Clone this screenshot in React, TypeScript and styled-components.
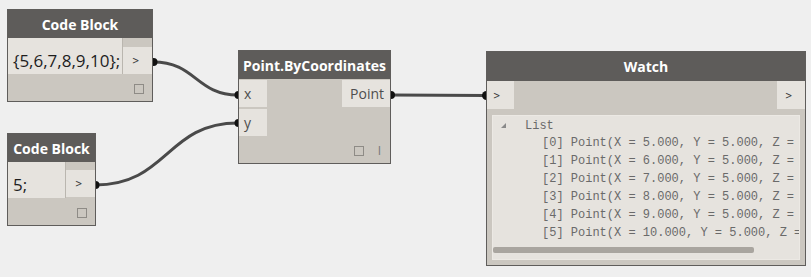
import React from "react";
import styled, { createGlobalStyle } from "styled-components";

const GlobalStyle = createGlobalStyle`
  html, body { margin: 0; padding: 0; background: #efefef; }
  body { font-family: "Open Sans", "Liberation Sans", sans-serif; }
`;

const C = {
  bg: "#efefef",
  header: "#5e5c5a",
  body: "#cbc7c0",
  port: "#e6e3de",
  border: "#5f5d5b",
  wire: "#4a4a4a",
  label: "#4e4e4e",
};

const Canvas = styled.div`
  position: relative;
  width: 811px;
  height: 277px;
  overflow: hidden;
  background: ${C.bg};
`;

const Wires = styled.svg`
  position: absolute;
  left: 0;
  top: 0;
  z-index: 0;
`;

const Node = styled.div<{ $x: number; $y: number; $w: number }>`
  position: absolute;
  left: ${(p) => p.$x}px;
  top: ${(p) => p.$y}px;
  width: ${(p) => p.$w}px;
  box-sizing: border-box;
  border: 1px solid ${C.border};
  background: ${C.body};
  z-index: 1;
  display: flex;
  flex-direction: column;
`;

const Header = styled.div<{ $h?: number }>`
  height: ${(p) => p.$h ?? 28}px;
  background: ${C.header};
  color: #ffffff;
  font: 700 14px "Open Sans", "Liberation Sans", sans-serif;
  display: flex;
  align-items: center;
  justify-content: center;
  white-space: nowrap;
`;

const CodeRow = styled.div`
  display: flex;
  height: 36px;
`;

const CodeArea = styled.div`
  flex: 1;
  background: ${C.port};
  border-right: 1px solid #bab6af;
  font: 400 17px "Open Sans", "Liberation Sans", sans-serif;
  color: #1e1e1e;
  padding: 8px 0 0 5px;
  display: flex;
  align-items: center;
  white-space: nowrap;
`;

const PortColumn = styled.div<{ $w: number; $top?: number; $gap?: number }>`
  width: ${(p) => p.$w}px;
  display: flex;
  flex-direction: column;
  gap: ${(p) => p.$gap ?? 0}px;
  padding-top: ${(p) => p.$top ?? 0}px;
`;

const Port = styled.div<{ $h?: number; $w?: number; $align?: "left" | "right"; $pad?: number }>`
  height: ${(p) => p.$h ?? 27}px;
  ${(p) => (p.$w ? `width: ${p.$w}px;` : "")}
  background: ${C.port};
  display: flex;
  align-items: center;
  justify-content: ${(p) => (p.$align === "right" ? "flex-end" : "flex-start")};
  padding: 0 ${(p) => p.$pad ?? 7}px;
  box-sizing: border-box;
  font: 400 14px "Open Sans", "Liberation Sans", sans-serif;
  color: ${C.label};
`;

const Arrow = styled.span`
  font: 400 11px "DejaVu Sans", "Liberation Sans", sans-serif;
  color: #3a3a3a;
  transform: scaleX(0.8);
`;

const PortRow = styled.div`
  display: flex;
  justify-content: space-between;
  padding-top: 1px;
`;

const Footer = styled.div`
  height: 27px;
  display: flex;
  justify-content: flex-end;
  align-items: flex-start;
  gap: 14px;
  padding: 10px 8px 0 0;
  box-sizing: border-box;
`;

const Check = styled.div`
  width: 10px;
  height: 10px;
  box-sizing: border-box;
  border: 1px solid #8e8b86;
`;

const Lacing = styled.span`
  font: 400 12px "Open Sans", "Liberation Sans", sans-serif;
  color: #777;
  line-height: 10px;
  margin-right: 1px;
`;

const WatchPorts = styled.div`
  display: flex;
  justify-content: space-between;
  height: 28px;
`;

const Panel = styled.div`
  margin: 6px 5px 5px 5px;
  height: 145px;
  background: ${C.port};
  box-sizing: border-box;
  border: 1px solid #ece9e4;
  overflow: hidden;
  display: flex;
  flex-direction: column;
  font: 400 12px "Liberation Mono", "DejaVu Sans Mono", monospace;
  color: #6a6a6a;
`;

const Tree = styled.div`
  padding-top: 1px;
`;

const TreeHead = styled.div`
  height: 17px;
  display: flex;
  align-items: center;
  padding-left: 8px;
`;

const Expander = styled.span`
  width: 0;
  height: 0;
  border-left: 5px solid transparent;
  border-bottom: 5px solid #8a8a8a;
  margin-right: 19px;
`;

const Row = styled.div`
  height: 18px;
  line-height: 18px;
  padding-left: 49px;
  white-space: pre;
`;

const Scroll = styled.div`
  margin: auto 45px 6px 0;
  height: 6px;
  border-radius: 2px;
  background: #a9a59f;
`;

const points = [5, 6, 7, 8, 9, 10];

export default function App() {
  return (
    <>
      <GlobalStyle />
      <Canvas>
        <Wires width={811} height={277}>
          <g stroke={C.wire} strokeWidth={3} fill="none" strokeLinecap="round">
            <path d="M153 62 C 196 62, 196 95, 238 95" />
            <path d="M95 185 C 168 185, 166 123, 238 123" />
            <path d="M391 95 L 486 95.5" />
          </g>
          <g fill="#111">
            <circle cx={153.5} cy={62} r={4} />
            <circle cx={238.5} cy={95} r={4} />
            <circle cx={238.5} cy={123} r={4} />
            <circle cx={95.5} cy={185} r={4} />
            <circle cx={391} cy={95} r={4} />
            <circle cx={486.5} cy={95.5} r={4.5} />
          </g>
        </Wires>

        <Node $x={7} $y={9} $w={146}>
          <Header>Code Block</Header>
          <CodeRow>
            <CodeArea>{"{5,6,7,8,9,10};"}</CodeArea>
            <PortColumn $w={29} $top={9}>
              <Port $pad={8}>
                <Arrow>&gt;</Arrow>
              </Port>
            </PortColumn>
          </CodeRow>
          <Footer>
            <Check />
          </Footer>
        </Node>

        <Node $x={7} $y={133} $w={89}>
          <Header>Code Block</Header>
          <CodeRow>
            <CodeArea>5;</CodeArea>
            <PortColumn $w={29} $top={8}>
              <Port $pad={8}>
                <Arrow>&gt;</Arrow>
              </Port>
            </PortColumn>
          </CodeRow>
          <Footer>
            <Check />
          </Footer>
        </Node>

        <Node $x={238} $y={50} $w={153}>
          <Header>Point.ByCoordinates</Header>
          <PortRow>
            <PortColumn $w={28} $gap={2}>
              <Port $pad={5}>x</Port>
              <Port $pad={5}>y</Port>
            </PortColumn>
            <PortColumn $w={48}>
              <Port $align="right" $pad={6}>
                Point
              </Port>
            </PortColumn>
          </PortRow>
          <Footer>
            <Check />
            <Lacing>I</Lacing>
          </Footer>
        </Node>

        <Node $x={486} $y={51} $w={320}>
          <Header $h={29}>Watch</Header>
          <WatchPorts>
            <Port $h={28} $w={27} $pad={5}>
              <Arrow>&gt;</Arrow>
            </Port>
            <Port $h={28} $w={28} $pad={7}>
              <Arrow>&gt;</Arrow>
            </Port>
          </WatchPorts>
          <Panel>
            <Tree>
              <TreeHead>
                <Expander />
                List
              </TreeHead>
              {points.map((x, i) => (
                <Row key={i}>{`[${i}] Point(X = ${x.toFixed(3)}, Y = 5.000, Z =`}</Row>
              ))}
            </Tree>
            <Scroll />
          </Panel>
        </Node>
      </Canvas>
    </>
  );
}
